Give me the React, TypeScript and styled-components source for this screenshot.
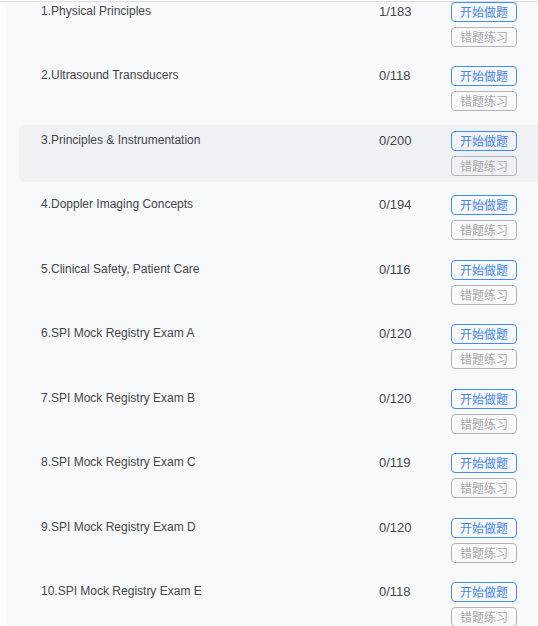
import React from "react";
import styled, { createGlobalStyle } from "styled-components";

const GlobalStyle = createGlobalStyle`
  html, body {
    margin: 0;
    padding: 0;
    background: #ffffff;
  }
  body {
    font-family: Arial, "Liberation Sans", "Noto Sans CJK SC", sans-serif;
  }
`;

type Chapter = {
  title: string;
  done: number;
  total: number;
};

const chapters: Chapter[] = [
  { title: "1.Physical Principles", done: 1, total: 183 },
  { title: "2.Ultrasound Transducers", done: 0, total: 118 },
  { title: "3.Principles & Instrumentation", done: 0, total: 200 },
  { title: "4.Doppler Imaging Concepts", done: 0, total: 194 },
  { title: "5.Clinical Safety, Patient Care", done: 0, total: 116 },
  { title: "6.SPI Mock Registry Exam A", done: 0, total: 120 },
  { title: "7.SPI Mock Registry Exam B", done: 0, total: 120 },
  { title: "8.SPI Mock Registry Exam C", done: 0, total: 119 },
  { title: "9.SPI Mock Registry Exam D", done: 0, total: 120 },
  { title: "10.SPI Mock Registry Exam E", done: 0, total: 118 },
];

function App() {
  return (
    <>
      <GlobalStyle />
      <Page>
        <TopBar />
        <Panel>
          <List>
            {chapters.map((c, i) => (
              <Row key={c.title} active={i === 2}>
                <Title>{c.title}</Title>
                <Count>
                  {c.done}/{c.total}
                </Count>
                <Actions>
                  <ActionButton variant="primary">开始做题</ActionButton>
                  <ActionButton variant="muted">错题练习</ActionButton>
                </Actions>
              </Row>
            ))}
          </List>
        </Panel>
      </Page>
    </>
  );
}

export default App;

const Page = styled.div`
  width: 538px;
  height: 626px;
  overflow: hidden;
  background: #ffffff;
`;

const TopBar = styled.div`
  position: sticky;
  top: 0;
  z-index: 1;
  height: 1px;
  background: #ffffff;
  border-bottom: 1px solid #dcdde0;
`;

const Panel = styled.div`
  margin-left: 6px;
  height: 640px;
  background: #f8f9fb;
  overflow: hidden;
`;

const List = styled.div`
  display: flex;
  flex-direction: column;
  gap: 7.45px;
  margin-top: -6px;
  padding-left: 13px;
`;

const Row = styled.div<{ active?: boolean }>`
  display: flex;
  align-items: flex-start;
  width: 539px;
  box-sizing: border-box;
  padding: 6px 0 6px 22px;
  border-radius: 5px;
  background: ${(p) => (p.active ? "#f0f1f5" : "transparent")};
`;

const Title = styled.div`
  flex: 1;
  font-size: 12px;
  line-height: 18px;
  color: #45474d;
  white-space: nowrap;
`;

const Count = styled.div`
  width: 72px;
  font-size: 13px;
  line-height: 20px;
  color: #45474d;
`;

const Actions = styled.div`
  display: flex;
  flex-direction: column;
  gap: 5px;
  width: 107px;
`;

const ActionButton = styled.button<{ variant: "primary" | "muted" }>`
  width: 66px;
  height: 20px;
  box-sizing: border-box;
  padding: 0;
  border-radius: 4px;
  background: transparent;
  font-family: "Noto Sans CJK SC", sans-serif;
  font-size: 12px;
  line-height: 18px;
  text-align: center;
  cursor: pointer;
  border: 1px solid
    ${(p) => (p.variant === "primary" ? "#3d8ef7" : "#b3b3b3")};
  color: ${(p) => (p.variant === "primary" ? "#4585f7" : "#a8a8a8")};
`;
